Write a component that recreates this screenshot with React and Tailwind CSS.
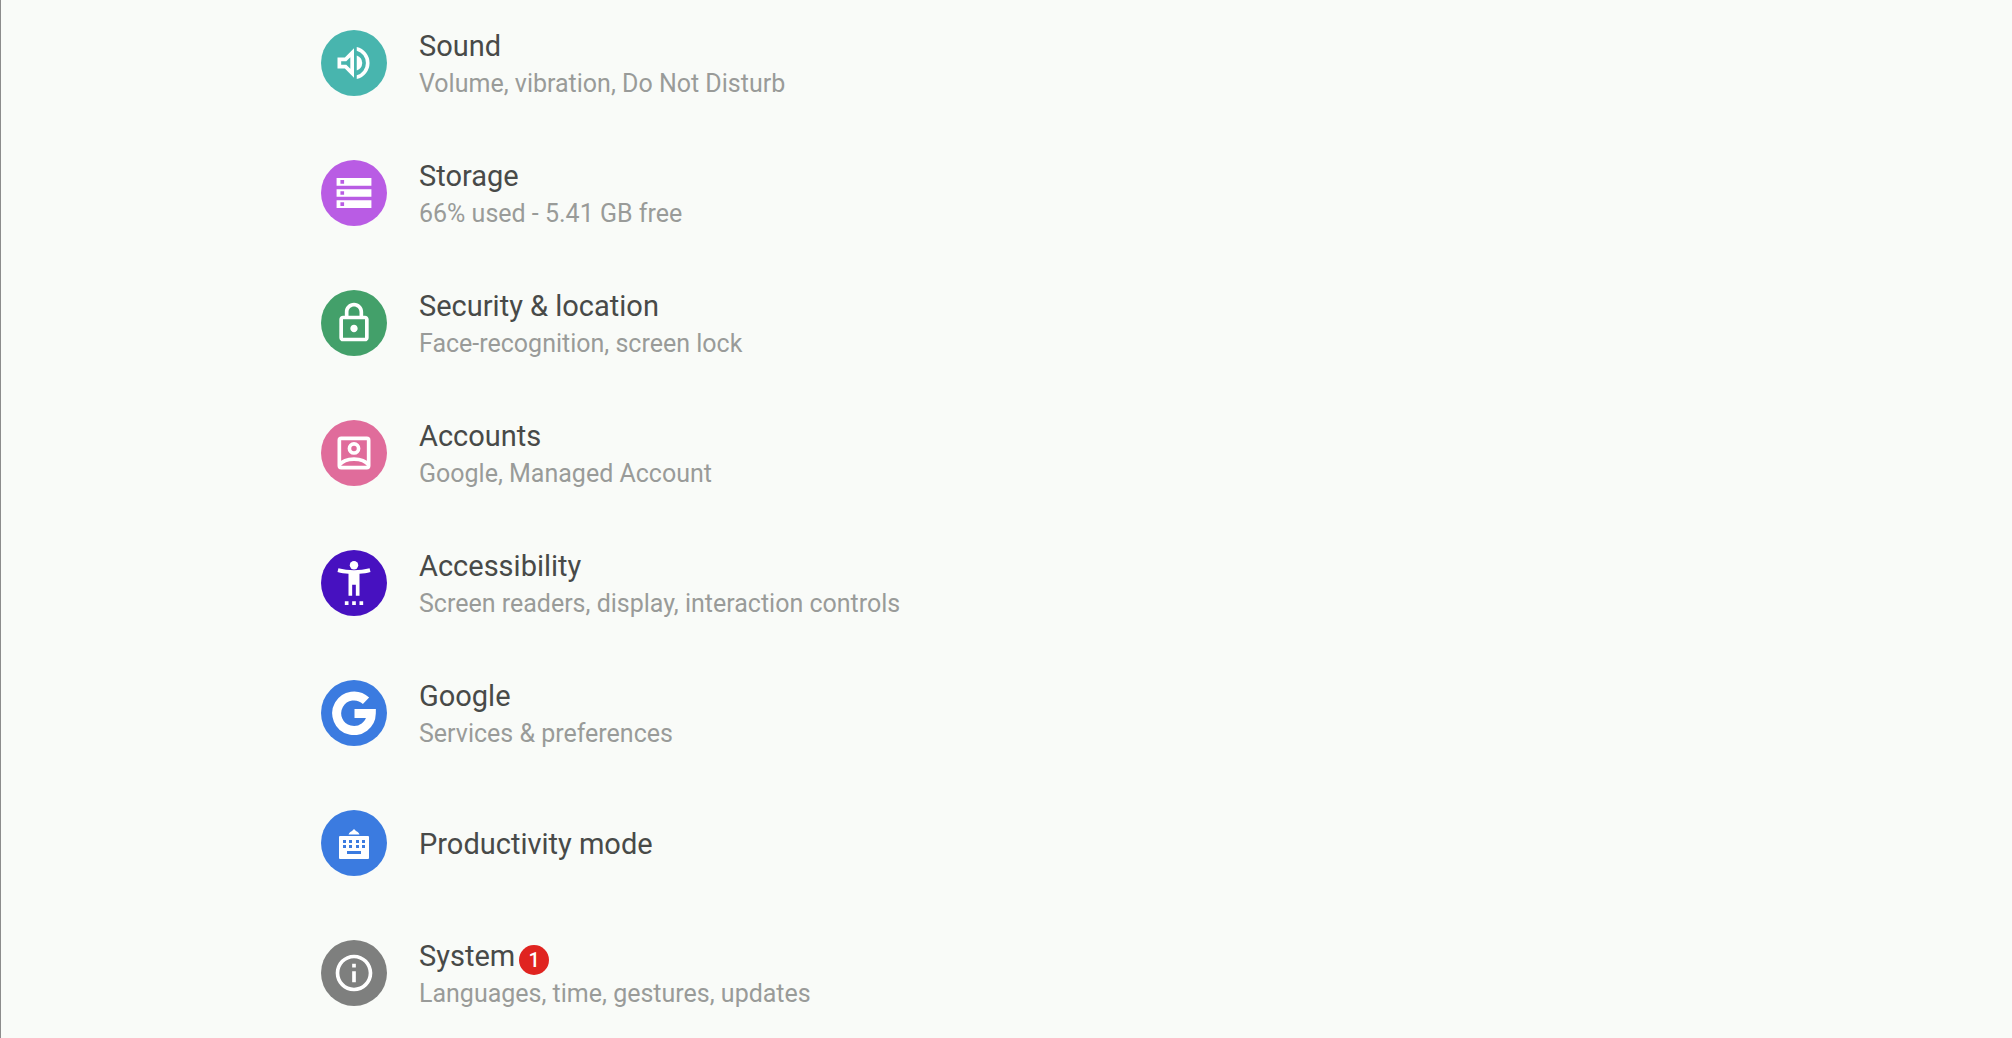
import React from 'react';

const SoundIcon = () => (
    <svg viewBox="0 0 24 24" className="size-11" fill="currentColor" aria-hidden="true">
        <path d="M3 9v6h4l5 5V4L7 9H3zm7-.2v6.4L7.8 13H5v-2h2.8L10 8.800z" />
        <path d="M13.500 7.970v8.060A4.500 4.500 0 0 0 16.500 12a4.500 4.500 0 0 0-3-4.030z" />
        <path d="M13.500 3.230v2.060a7 7 0 0 1 0 13.420v2.060a9 9 0 0 0 0-17.540z" />
    </svg>
);

const StorageIcon = () => (
    <svg viewBox="0 0 24 24" className="size-11" fill="currentColor" aria-hidden="true">
        <path
            fillRule="evenodd"
            d="M2.500 3.800h19v4.200h-19zM4.600 4.900v2h2v-2zM2.500 9.900h19v4.200h-19zM4.600 11v2h2v-2zM2.500 16h19v4.200h-19zM4.600 17.100v2h2v-2z"
        />
    </svg>
);

const LockIcon = () => (
    <svg viewBox="0 0 24 24" className="size-11" fill="currentColor" aria-hidden="true">
        <path d="M18 8h-1V6c0-2.760-2.240-5-5-5S7 3.240 7 6v2H6c-1.100 0-2 .9-2 2v10c0 1.100.9 2 2 2h12c1.100 0 2-.9 2-2V10c0-1.100-.9-2-2-2zM9 6c0-1.660 1.340-3 3-3s3 1.340 3 3v2H9V6zm9 14H6V10h12v10zm-6-3c1.100 0 2-.9 2-2s-.9-2-2-2-2 .9-2 2 .9 2 2 2z" />
    </svg>
);

const AccountsIcon = () => (
    <svg viewBox="0 0 24 24" className="size-11" fill="none" stroke="currentColor" strokeWidth="2" aria-hidden="true">
        <rect x="4" y="4" width="16" height="16" rx="1" />
        <circle cx="12" cy="9.500" r="2.500" />
        <path d="M4 18.500c1.500-2 4.500-3.200 8-3.200s6.500 1.200 8 3.200" />
    </svg>
);

const AccessibilityIcon = () => (
    <svg viewBox="0 0 24 24" className="size-11" fill="currentColor" aria-hidden="true">
        <path d="M20.500 4c-2.610.7-5.670 1-8.500 1s-5.890-.3-8.500-1L3 6c1.860.5 4 .83 6 1v12h2v-6h2v6h2V7c2-.17 4.140-.5 6-1l-.5-2z" />
        <circle cx="12" cy="2.300" r="2.300" />
        <path d="M7 24h2v-2H7v2zm4 0h2v-2h-2v2zm4 0h2v-2h-2v2z" />
    </svg>
);

const GoogleIcon = () => (
    <svg viewBox="0 0 44 44" className="size-11" fill="none" stroke="currentColor" strokeWidth="9" aria-hidden="true">
        <path d="M34 9.800A17.300 17.300 0 1 0 39.300 22.500H22.500" />
    </svg>
);

const KeyboardIcon = () => (
    <svg viewBox="0 0 44 44" className="size-11" aria-hidden="true">
        <path fill="currentColor" d="M16.500 13.500c1-2.500 2.500-3 3.500-3.500l2-2 2 2c1 .5 2.500 1 3.500 3.500z" />
        <rect x="7" y="15" width="30" height="23" rx="1" fill="currentColor" />
        <g fill="#3b7be0">
            <path d="M11 19h3v3h-3zM17 19h3v3h-3zM24 19h3v3h-3zM30 19h3v3h-3z" />
            <path d="M11 24h3v3h-3zM17 24h3v3h-3zM24 24h3v3h-3zM30 24h3v3h-3z" />
            <path d="M15 30h14v3H15z" />
        </g>
    </svg>
);

const InfoIcon = () => (
    <svg viewBox="0 0 24 24" className="size-11" fill="currentColor" aria-hidden="true">
        <path d="M11 7h2v2h-2zm0 4h2v6h-2zm1-9C6.480 2 2 6.480 2 12s4.480 10 10 10 10-4.480 10-10S17.520 2 12 2zm0 18c-4.410 0-8-3.590-8-8s3.590-8 8-8 8 3.590 8 8-3.590 8-8 8z" />
    </svg>
);

const items = [
    { title: 'Sound', summary: 'Volume, vibration, Do Not Disturb', color: 'bg-[#48b5ae]', icon: SoundIcon },
    { title: 'Storage', summary: '66% used - 5.41 GB free', color: 'bg-[#b95ce4]', icon: StorageIcon },
    { title: 'Security & location', summary: 'Face-recognition, screen lock', color: 'bg-[#43a06a]', icon: LockIcon },
    { title: 'Accounts', summary: 'Google, Managed Account', color: 'bg-[#e06c9b]', icon: AccountsIcon },
    { title: 'Accessibility', summary: 'Screen readers, display, interaction controls', color: 'bg-[#4711c0]', icon: AccessibilityIcon },
    { title: 'Google', summary: 'Services & preferences', color: 'bg-[#3b7be0]', icon: GoogleIcon },
    { title: 'Productivity mode', color: 'bg-[#3b7be0]', icon: KeyboardIcon },
    { title: 'System', summary: 'Languages, time, gestures, updates', color: 'bg-[#7e7f7e]', icon: InfoIcon, badge: 1 },
];

const SettingsRow = ({ title, summary, color, icon: Icon, badge }) => (
    <button type="button" className="flex h-[66px] w-full items-center gap-8 text-left">
        <span className={`flex size-[66px] shrink-0 items-center justify-center rounded-full text-white ${color}`}>
            <Icon />
        </span>
        <span className="flex flex-col pt-0.5">
            <span className="flex items-center gap-1 text-[29px] leading-10 text-[#484a48]">
                {title}
                {badge && (
                    <span className="mt-2 flex size-[30px] items-center justify-center rounded-full bg-[#e02420] text-xl font-medium text-white">
                        {badge}
                    </span>
                )}
            </span>
            {summary && <span className="text-[25px] leading-9 text-[#999b99]">{summary}</span>}
        </span>
    </button>
);

export default function App() {
    return (
        <main className="min-h-screen border-l border-[#8c8c8c] bg-[#f9fbf8] pt-[30px] pb-8 pl-80 font-['Roboto',sans-serif]">
            <ul className="flex flex-col gap-16">
                {items.map((item) => (
                    <li key={item.title}>
                        <SettingsRow {...item} />
                    </li>
                ))}
            </ul>
        </main>
    );
}
